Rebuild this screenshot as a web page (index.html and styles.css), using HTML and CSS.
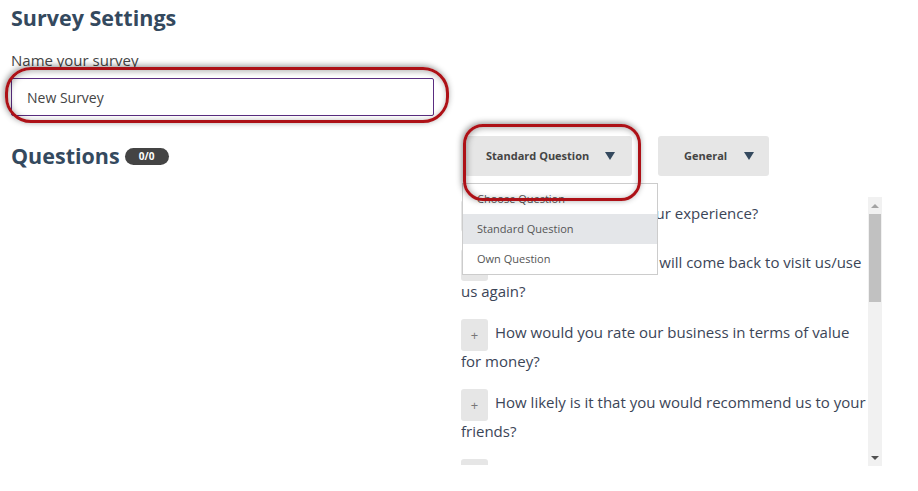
FILE: index.html
```html
<!DOCTYPE html>
<html>
<head>
<meta charset="utf-8">
<link rel="stylesheet" href="styles.css">
</head>
<body>
<div class="page">
  <h1 class="title">Survey Settings</h1>
  <label class="label">Name your survey</label>
  <div class="input-wrap">
    <input class="input" type="text" value="New Survey">
    <div class="mark mark-input"></div>
  </div>
  <div class="row">
    <div class="left">
      <h2 class="qtitle">Questions <span class="badge">0/0</span></h2>
    </div>
    <div class="right">
      <div class="selects">
        <div class="select-wrap">
          <div class="select select-std">Standard Question <span class="caret"></span></div>
          <ul class="menu">
            <li>Choose Question</li>
            <li class="active">Standard Question</li>
            <li>Own Question</li>
          </ul>
          <div class="mark mark-select"></div>
        </div>
        <div class="select select-gen">General <span class="caret"></span></div>
      </div>
      <div class="list">
        <div class="items">
          <div class="q"><span class="add">+</span>How would you rate your experience?</div>
          <div class="q"><span class="add">+</span>How likely is it that you will come back to visit us/use us again?</div>
          <div class="q"><span class="add">+</span>How would you rate our business in terms of value for money?</div>
          <div class="q"><span class="add">+</span>How likely is it that you would recommend us to your friends?</div>
          <div class="q"><span class="add">+</span>How would you rate our staff?</div>
        </div>
        <div class="scrollbar">
          <div class="sb-btn"><span class="tri-up"></span></div>
          <div class="sb-track"><div class="sb-thumb"></div></div>
          <div class="sb-btn"><span class="tri-down"></span></div>
        </div>
      </div>
    </div>
  </div>
</div>
</body>
</html>
```

FILE: styles.css
```css
* { box-sizing: border-box; }
html, body { margin: 0; padding: 0; background: #fff; }
body { font-family: "Open Sans", "Liberation Sans", sans-serif; color: #444; }
.page { padding-left: 11px; width: 918px; height: 491px; overflow: hidden; }
.title { font-size: 21.5px; line-height: 30px; font-weight: 700; color: #34495e; margin: 3px 0 0; }
.label { display: block; font-size: 15px; line-height: 20px; color: #444; margin-top: 17px; }
.input-wrap { position: relative; width: 423px; margin-top: 8px; }
.input { display: block; width: 423px; height: 38px; border: 1px solid #5a2d80; border-radius: 2px; padding: 0 15px; font-family: "Open Sans", sans-serif; font-size: 14px; color: #444; background: #fff; outline: none; }
.mark { position: absolute; border: 3px solid #ad1117; box-shadow: -1px -1px 6px rgba(0,0,0,0.45), inset 1px 1px 6px rgba(0,0,0,0.35); pointer-events: none; z-index: 5; }
.mark-input { left: -6px; top: -11px; width: 444px; height: 56px; border-radius: 26px; }
.row { display: flex; margin-top: 20px; }
.left { width: 450px; padding-top: 5px; }
.qtitle { margin: 0; font-size: 21.5px; line-height: 30px; font-weight: 700; color: #34495e; display: flex; align-items: center; }
.badge { display: inline-block; margin-left: 5px; width: 44px; height: 17px; line-height: 17px; border-radius: 9px; background: #444; color: #fff; font-size: 10px; font-weight: 700; text-align: center; }
.right { width: 421px; }
.selects { display: flex; height: 40px; }
.select-wrap { position: relative; margin-left: 4px; }
.select { height: 40px; background: #e6e6e6; border-radius: 3px; font-size: 11px; font-weight: 700; color: #444; display: flex; align-items: center; padding-bottom: 1px; }
.select-std { width: 167px; padding-left: 21px; }
.select-std .caret { margin-left: 16px; }
.select-gen { width: 111px; margin-left: 26px; padding-left: 26px; }
.select-gen .caret { margin-left: 17px; }
.caret { width: 0; height: 0; border-left: 5px solid transparent; border-right: 5px solid transparent; border-top: 8px solid #34495e; }
.menu { position: absolute; left: -3px; top: 47px; width: 196px; margin: 0; padding: 0; list-style: none; background: #fff; border: 1px solid #ccc; z-index: 3; }
.menu li { height: 30px; line-height: 30px; padding-left: 14px; font-size: 11px; color: #555; }
.menu li.active { background: #e4e6e9; }
.mark-select { left: -2px; top: -12px; width: 178px; height: 77px; border-radius: 20px; }
.list { display: flex; margin-top: 21px; height: 269px; }
.items { width: 407px; height: 268px; overflow: hidden; padding-top: 2px; }
.q { font-size: 15px; line-height: 29px; font-weight: 400; color: #3b4557; margin-bottom: 12px; }
.q:first-child { margin-bottom: 20px; }
.add { display: inline-block; width: 27px; height: 32px; line-height: 32px; margin: -2px 7px -4px 0; vertical-align: middle; text-align: center; background: #e6e6e6; border-radius: 3px; color: #777; font-weight: 400; font-size: 13px; }
.scrollbar { width: 14px; background: #f1f1f1; display: flex; flex-direction: column; }
.sb-btn { height: 17px; display: flex; align-items: center; justify-content: center; }
.sb-track { flex: 1; }
.sb-thumb { margin: 0 1px; height: 88px; background: #c1c1c1; }
.tri-up { width: 0; height: 0; border-left: 4px solid transparent; border-right: 4px solid transparent; border-bottom: 4px solid #a3a3a3; }
.tri-down { width: 0; height: 0; border-left: 4px solid transparent; border-right: 4px solid transparent; border-top: 4px solid #505050; }
```
